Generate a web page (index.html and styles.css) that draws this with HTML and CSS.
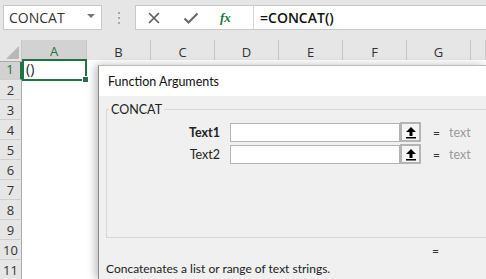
FILE: index.html
```html
<!DOCTYPE html>
<html lang="en">
<head>
<meta charset="UTF-8">
<title>CONCAT - Function Arguments</title>
<link rel="stylesheet" href="styles.css">
</head>
<body>
<div class="toolbar">
  <div class="namebox">
    <span>CONCAT</span>
    <span class="caret"></span>
  </div>
  <div class="grip"><i></i><i></i><i></i></div>
  <div class="formula">
    <div class="fbtns">
      <svg width="14" height="14" viewBox="0 0 14 14"><path d="M2 2 L12 12 M12 2 L2 12" stroke="#5a5a5a" stroke-width="1.6" fill="none"/></svg>
      <svg width="16" height="14" viewBox="0 0 16 14"><path d="M1.5 7.5 L5.5 11.5 L14.5 2.5" stroke="#6a6a6a" stroke-width="2.2" fill="none"/></svg>
      <span class="fx">fx</span>
    </div>
    <div class="ftext">=CONCAT()</div>
  </div>
</div>

<div class="sheet">
  <div class="corner"><span></span></div>
  <div class="colhead sel">A</div>
  <div class="colhead">B</div>
  <div class="colhead">C</div>
  <div class="colhead">D</div>
  <div class="colhead">E</div>
  <div class="colhead">F</div>
  <div class="colhead">G</div>
  <div class="colhead"></div>

  <div class="rowhead sel">1</div><div class="cell active">()</div><div class="cell rest"></div>
  <div class="rowhead">2</div><div class="cell"></div><div class="cell rest"></div>
  <div class="rowhead">3</div><div class="cell"></div><div class="cell rest"></div>
  <div class="rowhead">4</div><div class="cell"></div><div class="cell rest"></div>
  <div class="rowhead">5</div><div class="cell"></div><div class="cell rest"></div>
  <div class="rowhead">6</div><div class="cell"></div><div class="cell rest"></div>
  <div class="rowhead">7</div><div class="cell"></div><div class="cell rest"></div>
  <div class="rowhead">8</div><div class="cell"></div><div class="cell rest"></div>
  <div class="rowhead">9</div><div class="cell"></div><div class="cell rest"></div>
  <div class="rowhead">10</div><div class="cell"></div><div class="cell rest"></div>
  <div class="rowhead">11</div><div class="cell"></div><div class="cell rest"></div>
</div>

<div class="dialog">
  <div class="title">Function Arguments</div>
  <div class="body">
    <fieldset class="group">
      <legend>CONCAT</legend>
      <div class="arg">
        <label class="bold">Text1</label>
        <div class="input"></div>
        <div class="refbtn"><svg width="12" height="13" viewBox="0 0 12 13"><path d="M6 1 L11 6 L7.5 6 L7.5 10 L4.5 10 L4.5 6 L1 6 Z" fill="#000"/><rect x="1" y="11" width="10" height="1.5" fill="#000"/></svg></div>
        <span class="eq">=</span>
        <span class="val">text</span>
      </div>
      <div class="arg">
        <label>Text2</label>
        <div class="input"></div>
        <div class="refbtn"><svg width="12" height="13" viewBox="0 0 12 13"><path d="M6 1 L11 6 L7.5 6 L7.5 10 L4.5 10 L4.5 6 L1 6 Z" fill="#000"/><rect x="1" y="11" width="10" height="1.5" fill="#000"/></svg></div>
        <span class="eq">=</span>
        <span class="val">text</span>
      </div>
    </fieldset>
    <div class="result"><span class="eq">=</span></div>
    <div class="desc">Concatenates a list or range of text strings.</div>
  </div>
</div>
</body>
</html>
```

FILE: styles.css
```css
/* base */
body {
  margin: 0;
  width: 486px;
  height: 279px;
  overflow: hidden;
  position: relative;
  font-family: "Open Sans", "Noto Sans", sans-serif;
  background: #fff;
  color: #222;
}

/* barra superior */
.toolbar {
  height: 40px;
  background: #e6e6e6;
  display: flex;
  align-items: flex-start;
  padding-top: 5px;
  box-sizing: border-box;
}

.namebox {
  margin-left: 3px;
  width: 99px;
  height: 25px;
  box-sizing: border-box;
  background: #fff;
  border: 1px solid #c8c8c8;
  display: flex;
  align-items: center;
  justify-content: space-between;
  padding: 0 6px 0 5px;
  font-size: 14px;
  color: #333;
}

.caret {
  width: 0;
  height: 0;
  border-left: 4px solid transparent;
  border-right: 4px solid transparent;
  border-top: 4px solid #777;
  margin-top: -3px;
}

.grip {
  width: 33px;
  height: 25px;
  display: flex;
  flex-direction: column;
  align-items: center;
  justify-content: center;
  gap: 3px;
}

.grip i {
  width: 2px;
  height: 2px;
  background: #a8a8a8;
}

.formula {
  flex: 1;
  height: 25px;
  box-sizing: border-box;
  background: #fff;
  border: 1px solid #c8c8c8;
  border-right: none;
  display: flex;
  align-items: center;
}

.fbtns {
  width: 118px;
  display: flex;
  align-items: center;
  padding-left: 11px;
  box-sizing: border-box;
  border-right: 1px solid #d4d4d4;
  height: 100%;
}

.fbtns svg:first-child { margin-right: 22px; }
.fbtns svg:nth-child(2) { margin-right: 21px; }

.fx {
  font-family: "Liberation Serif", serif;
  font-style: italic;
  font-weight: bold;
  font-size: 13px;
  color: #217346;
}

.ftext {
  padding-left: 6px;
  font-size: 14px;
  font-weight: 600;
  color: #111;
}

/* hoja */
.sheet {
  display: grid;
  grid-template-columns: 22px 65px repeat(6, 64px) 15px;
  grid-auto-rows: 20px;
}

.corner {
  background: #e6e6e6;
  border-bottom: 1px solid #ababab;
  border-right: 1px solid #c6c6c6;
  box-sizing: border-box;
  position: relative;
  height: 22px;
}

.corner span {
  position: absolute;
  right: 2px;
  bottom: 2px;
  width: 0;
  height: 0;
  border-left: 13px solid transparent;
  border-bottom: 13px solid #b8b8b8;
}

.colhead {
  height: 22px;
  background: #e6e6e6;
  border-bottom: 1px solid #ababab;
  border-right: 1px solid #c6c6c6;
  box-sizing: border-box;
  display: flex;
  align-items: center;
  justify-content: center;
  font-size: 13px;
  color: #333;
  padding-top: 2px;
}

.colhead.sel {
  background: #d2d2d2;
  color: #217346;
  border-bottom: 2px solid #217346;
}

.sheet > .rowhead:nth-child(10) { margin-top: -2px; }

.rowhead {
  background: #e6e6e6;
  border-bottom: 1px solid #cfcfcf;
  border-right: 1px solid #ababab;
  box-sizing: border-box;
  font-size: 13px;
  color: #333;
  display: flex;
  align-items: center;
  justify-content: center;
}

.rowhead.sel {
  background: #d2d2d2;
  color: #217346;
  border-right: 2px solid #217346;
}

.cell {
  background: #fff;
}

.cell.rest {
  grid-column: 3 / -1;
}

.cell.active {
  border: 2px solid #217346;
  box-sizing: border-box;
  font-size: 14px;
  padding-left: 2px;
  line-height: 16px;
  position: relative;
  margin-top: -1px;
  height: 22px;
}

.cell.active::after {
  content: "";
  position: absolute;
  right: -4px;
  bottom: -4px;
  width: 5px;
  height: 5px;
  background: #217346;
  border: 1px solid #fff;
}

/* dialogo */
.dialog {
  position: absolute;
  left: 98px;
  top: 65px;
  width: 387px;
  height: 213px;
  background: #f0f0f0;
  border-left: 1px solid #8a8a8a;
  border-top: 1px solid #bcbcbc;
  box-shadow: -3px 0 8px rgba(0, 0, 0, 0.25);
  font-family: Lato, "Open Sans", sans-serif;
  font-size: 12px;
  color: #222;
  overflow: hidden;
}

.title {
  height: 30px;
  background: #fff;
  padding-left: 9px;
  display: flex;
  align-items: center;
  font-size: 12.5px;
  color: #111;
}

.body {
  padding: 6px 0 0 7px;
}

.group {
  margin: 0;
  height: 136px;
  box-sizing: border-box;
  border: 1px solid #d6d6d6;
  border-right: none;
  padding: 5px 0 0 0;
}

.group legend {
  padding: 0 2px;
  margin-left: 2px;
  color: #222;
  font-size: 12.5px;
}

.arg {
  display: flex;
  align-items: center;
  height: 20px;
  margin-bottom: 2px;
}

.arg label {
  width: 123px;
  text-align: right;
  padding-right: 10px;
  box-sizing: border-box;
  font-size: 12.5px;
}

.arg label.bold { font-weight: bold; }

.input {
  width: 170px;
  height: 19px;
  box-sizing: border-box;
  background: #fff;
  border: 1px solid #b4b4b4;
  flex: none;
}

.refbtn {
  width: 21px;
  height: 20px;
  box-sizing: border-box;
  border: 2px solid #b4b4b4;
  background: #f4f4f4;
  display: flex;
  align-items: center;
  justify-content: center;
  flex: none;
}

.eq {
  margin-left: 12px;
  color: #333;
}

.val {
  margin-left: 9px;
  color: #9a9a9a;
  font-size: 12.5px;
}

.result {
  height: 20px;
  display: flex;
  align-items: center;
  padding-left: 314px;
  margin-top: 2px;
}

.desc {
  line-height: 17px;
}
```
